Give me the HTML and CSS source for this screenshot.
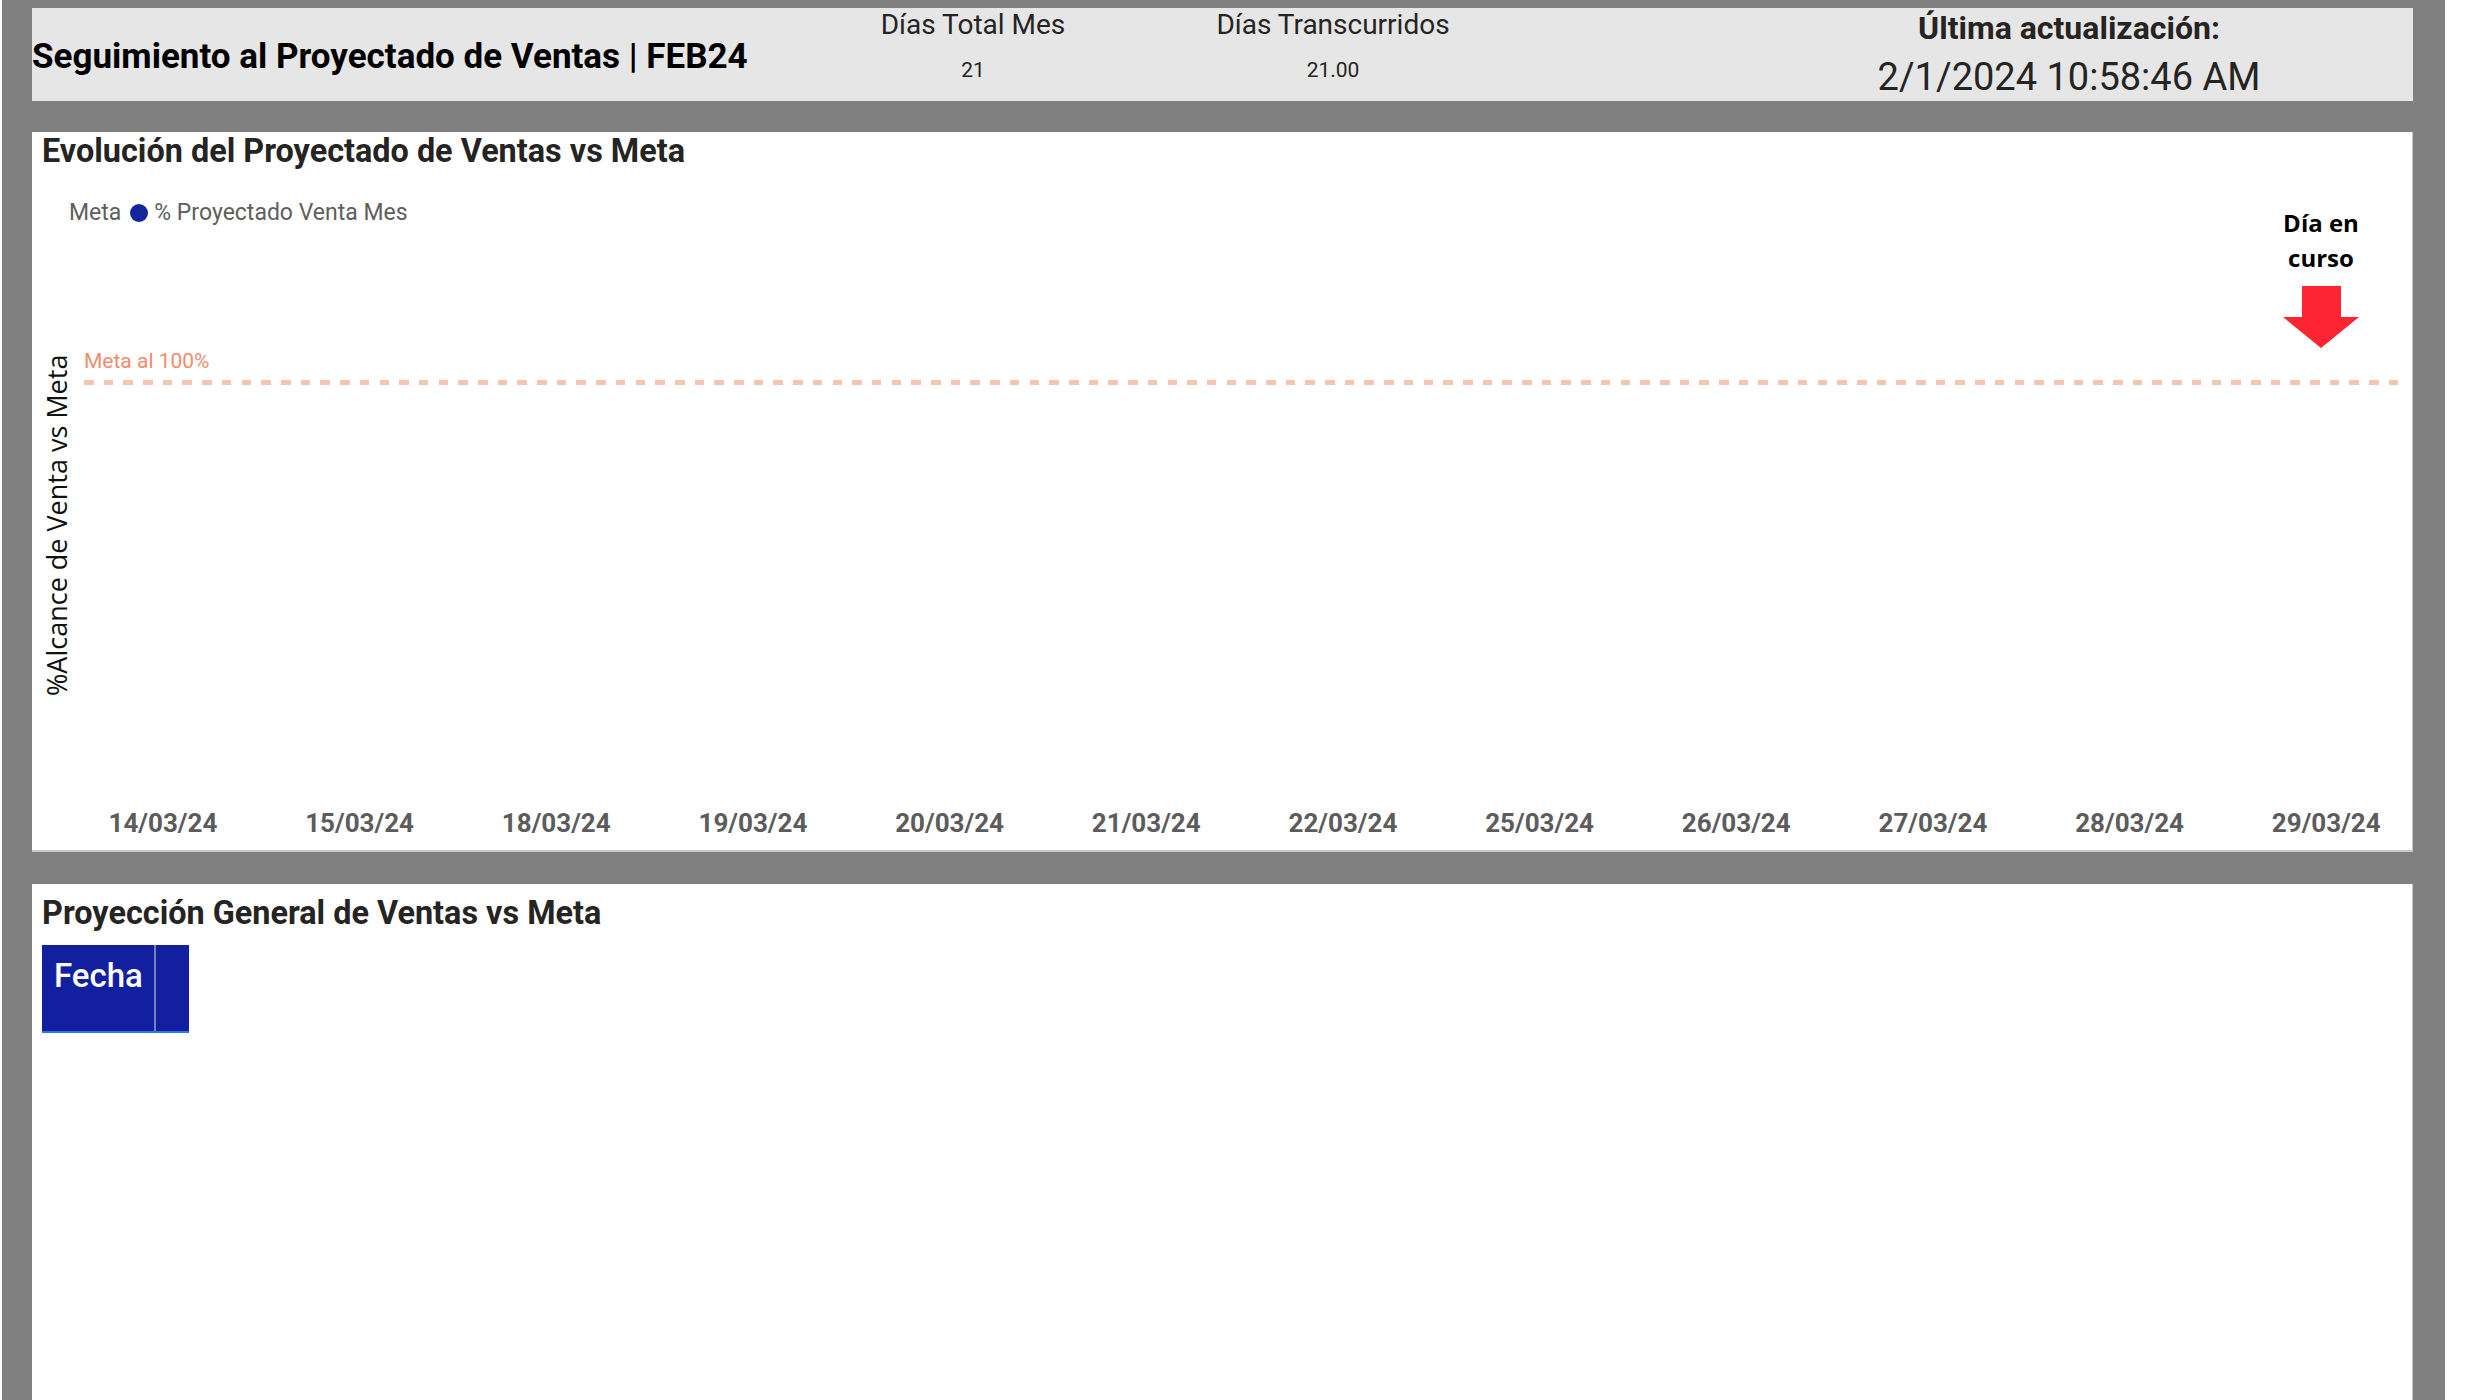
FILE: index.html
```html
<!DOCTYPE html>
<html lang="es">
<head>
<meta charset="utf-8">
<title>Seguimiento al Proyectado de Ventas</title>
<link rel="stylesheet" href="styles.css">
</head>
<body>
<div class="canvas">
  <header class="topbar">
    <h1 class="report-title">Seguimiento al Proyectado de Ventas | FEB24</h1>
    <div class="kpi kpi-total">
      <div class="kpi-label">Días Total Mes</div>
      <div class="kpi-value">21</div>
    </div>
    <div class="kpi kpi-elapsed">
      <div class="kpi-label">Días Transcurridos</div>
      <div class="kpi-value">21.00</div>
    </div>
    <div class="update">
      <div class="update-label">Última actualización:</div>
      <div class="update-value">2/1/2024 10:58:46 AM</div>
    </div>
  </header>

  <section class="panel chart-panel">
    <h2 class="panel-title">Evolución del Proyectado de Ventas vs Meta</h2>
    <div class="legend">
      <span class="legend-item">Meta</span>
      <span class="legend-dot"></span>
      <span class="legend-item">% Proyectado Venta Mes</span>
    </div>
    <div class="plot-row">
      <div class="y-title">%Alcance de Venta vs Meta</div>
      <div class="plot">
        <div class="goal-label">Meta al 100%</div>
        <div class="goal-line"></div>
      </div>
    </div>
    <div class="x-axis">
      <span>14/03/24</span><span>15/03/24</span><span>18/03/24</span><span>19/03/24</span>
      <span>20/03/24</span><span>21/03/24</span><span>22/03/24</span><span>25/03/24</span>
      <span>26/03/24</span><span>27/03/24</span><span>28/03/24</span><span>29/03/24</span>
    </div>
    <div class="today-marker">
      <div class="today-text">Día en<br>curso</div>
      <svg class="today-arrow" width="76" height="62" viewBox="0 0 76 62" aria-hidden="true">
        <polygon points="19,0 58,0 58,31 76,31 38,62 0,31 19,31" fill="#fe2432"/>
      </svg>
    </div>
  </section>

  <section class="panel table-panel">
    <h2 class="panel-title table-title">Proyección General de Ventas vs Meta</h2>
    <div class="table-head">
      <div class="th th-date">Fecha</div>
      <div class="th th-empty"></div>
    </div>
  </section>
</div>
</body>
</html>
```

FILE: styles.css
```css
html, body {
  margin: 0;
  padding: 0;
  background: #ffffff;
}

.canvas {
  margin-left: 2px;
  width: 2443px;
  min-height: 1400px;
  box-sizing: border-box;
  background: #808080;
  padding: 8px 32px 0 30px;
  display: flex;
  flex-direction: column;
  font-family: Roboto, "Liberation Sans", sans-serif;
}

/* ---------- top bar ---------- */
.topbar {
  height: 93px;
  background: #e6e6e6;
  margin-bottom: 31px;
  display: grid;
  grid-template-columns: 821px 240px 120px 240px 416px 400px;
  align-items: start;
}

.report-title {
  grid-column: 1;
  margin: 31px 0 0 0;
  font-weight: 700;
  font-size: 35px;
  line-height: 1;
  color: #000000;
  white-space: nowrap;
}

.kpi {
  text-align: center;
  color: #252423;
  white-space: nowrap;
}
.kpi-total { grid-column: 2; }
.kpi-elapsed { grid-column: 4; }

.kpi-label {
  margin-top: 3px;
  font-size: 28px;
  line-height: 1;
}
.kpi-value {
  margin-top: 21px;
  font-size: 21px;
  line-height: 1;
}

.update {
  grid-column: 6;
  text-align: center;
  color: #252423;
  white-space: nowrap;
}
.update-label {
  margin-top: 4px;
  font-weight: 700;
  font-size: 32px;
  line-height: 1;
}
.update-value {
  margin-top: 14px;
  font-size: 38px;
  line-height: 1;
}

/* ---------- panels ---------- */
.panel {
  background: #ffffff;
  box-sizing: border-box;
  border-right: 1px solid #c8c8c8;
}

.panel-title {
  margin: 3px 0 0 10px;
  font-weight: 700;
  font-size: 32.4px;
  line-height: 1;
  color: #252423;
  white-space: nowrap;
}

.chart-panel {
  position: relative;
  height: 720px;
  margin-bottom: 32px;
  border-bottom: 2px solid #c8c8c8;
  display: flex;
  flex-direction: column;
}

.legend {
  margin: 34px 0 0 37px;
  display: flex;
  align-items: center;
  font-size: 23px;
  line-height: 1;
  color: #605e5c;
}
.legend-dot {
  width: 18px;
  height: 18px;
  border-radius: 50%;
  background: #1224a0;
  margin: 0 6px 0 9px;
}

.plot-row {
  margin-top: 17px;
  height: 568px;
  display: flex;
}

.y-title {
  width: 30px;
  margin-left: 10px;
  writing-mode: vertical-rl;
  transform: rotate(180deg);
  text-align: center;
  font-family: "Open Sans", "Noto Sans", sans-serif;
  font-size: 27px;
  line-height: 30px;
  color: #111111;
  white-space: nowrap;
}

.plot {
  flex: 1;
  padding-left: 12px;
  margin-right: 10px;
}

.goal-label {
  margin-top: 110px;
  font-size: 21px;
  line-height: 1;
  color: #f08c6e;
}

.goal-line {
  margin-top: 8px;
  height: 5px;
  background: repeating-linear-gradient(to right, #f6c5b0 0, #f6c5b0 9.5px, transparent 9.5px, transparent 19.7px);
}

.x-axis {
  margin: 1px 0 0 32.6px;
  width: 2360px;
  display: grid;
  grid-template-columns: repeat(12, 1fr);
  font-weight: 700;
  font-size: 26px;
  line-height: 1;
  color: #5c5c5c;
  text-align: center;
}

.today-marker {
  position: absolute;
  top: 73px;
  right: 31px;
  width: 120px;
  text-align: center;
}
.today-text {
  font-family: "Open Sans", "Noto Sans", sans-serif;
  font-weight: 700;
  font-size: 24px;
  line-height: 35px;
  color: #000000;
}
.today-arrow {
  display: block;
  margin: 11px auto 0;
}

/* ---------- table panel ---------- */
.table-panel {
  flex: 1;
}
.table-title {
  margin-top: 13px;
}

.table-head {
  margin: 16px 0 0 10px;
  width: 147px;
  height: 88px;
  box-sizing: border-box;
  background: #1220a0;
  border-bottom: 2px solid #2b78e4;
  display: flex;
}
.th-date {
  width: 114px;
  box-sizing: border-box;
  padding: 14px 0 0 12px;
  border-right: 2px solid #7880b8;
  font-weight: 500;
  font-size: 33px;
  line-height: 1;
  color: #ffffff;
}
.th-empty {
  flex: 1;
}
```
